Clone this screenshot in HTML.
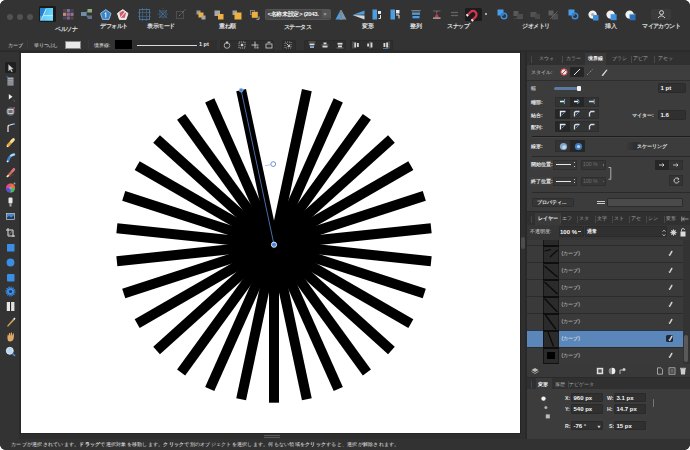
<!DOCTYPE html>
<html><head><meta charset="utf-8"><style>
*{box-sizing:border-box;margin:0;padding:0}
html,body{width:690px;height:450px;overflow:hidden;background:#fff}
body{font-family:"Liberation Sans",sans-serif;color:#ddd;position:relative}
#win{position:absolute;left:0;top:0;width:690px;height:450px;border-radius:6px;overflow:hidden;background:#2c2c2c}
.a{position:absolute}
.t{position:absolute;line-height:1;white-space:nowrap}
.c{position:absolute;line-height:1;white-space:nowrap;transform:translateX(-50%)}
svg{position:absolute;overflow:visible}
</style></head><body><div id="win">
<div class="a" style="left:0px;top:0px;width:690px;height:50px;background:#333333;"></div>
<div class="a" style="left:0px;top:50.5px;width:690px;height:2.5px;background:#2a2a2a;"></div>
<div class="a" style="left:0px;top:52px;width:19px;height:387px;background:#333333;"></div>
<div class="a" style="left:19px;top:52px;width:2px;height:381px;background:#2a2a2a;"></div>
<div class="a" style="left:21px;top:53px;width:499px;height:380px;background:#ffffff;"></div>
<div class="a" style="left:520px;top:52px;width:7px;height:387px;background:#2f2f2f;"></div>
<div class="a" style="left:520px;top:52px;width:1px;height:382px;background:#252525;"></div>
<div class="a" style="left:524.5px;top:52px;width:2.5px;height:387px;background:#292929;"></div>
<div class="a" style="left:521.3px;top:236.5px;width:3.6px;height:12.5px;background:#4c4c4c;border-radius:2px"></div>
<div class="a" style="left:527px;top:52px;width:163px;height:387px;background:#3c3c3c;"></div>
<div class="a" style="left:19px;top:433px;width:501px;height:1px;background:#262626;"></div>
<div class="a" style="left:19px;top:434px;width:501px;height:5px;background:#2e2e2e;"></div>
<div class="a" style="left:264px;top:435px;width:16px;height:0.8px;background:#5a5a5a;"></div>
<div class="a" style="left:264px;top:437px;width:16px;height:0.8px;background:#5a5a5a;"></div>
<div class="a" style="left:0px;top:439px;width:690px;height:11px;background:#323232;"></div>
<div class="a" style="left:7px;top:14.2px;width:6px;height:6px;background:#525252;border-radius:50%"></div>
<div class="a" style="left:17px;top:14.2px;width:6px;height:6px;background:#525252;border-radius:50%"></div>
<div class="a" style="left:27px;top:14.2px;width:6px;height:6px;background:#525252;border-radius:50%"></div>
<div class="a" style="left:38.7px;top:6px;width:17px;height:16px;background:#1a1a1a;border-radius:1.5px"></div>
<svg style="left:40.3px;top:7.7px" width="13.3" height="12.6" viewBox="0 0 13.3 12.6"><defs><linearGradient id="lg" x1="0" y1="0" x2="1" y2="0.3"><stop offset="0" stop-color="#3aa8e8"/><stop offset="1" stop-color="#6ad8fc"/></linearGradient></defs><rect width="13" height="12.7" fill="url(#lg)"/><path d="M0 0 H6 L1 11.5 L0 11.5Z" fill="#1f6fc0" opacity="0.75"/><path d="M1.5 11.5 L6.2 0.8 M3.6 7.7 H13" stroke="#d8f4ff" stroke-width="0.9" fill="none"/><rect y="8" width="13" height="4.7" fill="#8ee4ff" opacity="0.35"/></svg>
<svg style="left:62.5px;top:8.5px" width="11" height="11" viewBox="0 0 11 11"><rect x="3.7" y="0" width="3.2" height="3.2" fill="#7d6f9a" opacity="1"/><rect x="0" y="3.7" width="3.2" height="3.2" fill="#c08a7a" opacity="1"/><rect x="3.7" y="3.7" width="3.2" height="3.2" fill="#8a6a90" opacity="1"/><rect x="7.4" y="3.7" width="3.2" height="3.2" fill="#9a7090" opacity="1"/><rect x="3.7" y="7.4" width="3.2" height="3.2" fill="#7a6488" opacity="1"/><rect x="0" y="0" width="3.2" height="3.2" fill="#6a5a6a" opacity="0.45"/><rect x="7.4" y="7.4" width="3.2" height="3.2" fill="#7a5a70" opacity="0.45"/><rect x="7.4" y="0" width="3.2" height="3.2" fill="#5a5a70" opacity="0.45"/><rect x="0" y="7.4" width="3.2" height="3.2" fill="#6a5a78" opacity="0.45"/></svg>
<svg style="left:81px;top:9px" width="11" height="10" viewBox="0 0 11 10"><rect x="0" y="3" width="5" height="4" fill="#6f8ca8"/><rect x="6.5" y="0" width="4.5" height="3.5" fill="#8fae78"/><rect x="6.5" y="6.5" width="4.5" height="3.5" fill="#6a82a8" opacity="0.8"/><path d="M5 5 L6.5 2 M5 5 L6.5 8" stroke="#7a9ab0" stroke-width="0.8"/></svg>
<svg style="left:99.5px;top:9px" width="11.5" height="11" viewBox="0 0 11.5 11"><path d="M5.75 0.6 L11 4.4 L9 10.4 L2.5 10.4 L0.5 4.4 Z" fill="#3a84c8" stroke="#9cc8ec" stroke-width="0.9" stroke-linejoin="round"/><path d="M5.3 3.5 H6.3 V8.5 H5.3Z M4.3 4.5 L5.3 3.5 V4.7Z" fill="#f0f0f0"/></svg>
<svg style="left:117px;top:9px" width="11.5" height="11" viewBox="0 0 11.5 11"><path d="M5.75 0.6 L11 4.4 L9 10.4 L2.5 10.4 L0.5 4.4 Z" fill="#e8e8e8" stroke="#f4f4f4" stroke-width="0.9" stroke-linejoin="round"/><path d="M2.5 4 L5.75 1.8 L9 4 L7.8 8.8 L3.5 8.8Z" fill="#d8586a"/><path d="M3.5 8.5 L8.2 3" stroke="#f4f4f4" stroke-width="1"/></svg>
<svg style="left:138px;top:8px" width="12.5" height="12" viewBox="0 0 12.5 12"><g opacity="0.75"><rect x="1.5" y="1.5" width="10" height="10" fill="none" stroke="#4a86bd" stroke-width="1"/><path d="M0 4.5H13M0 8.5H13M4.5 0V13M8.5 0V13" stroke="#4a86bd" stroke-width="0.8" opacity="0.7"/></g></svg>
<svg style="left:157px;top:8px" width="12" height="12" viewBox="0 0 12 12"><g opacity="0.7"><path d="M2 2L10 10M10 2L2 10" stroke="#4a7fae" stroke-width="1"/><rect x="3" y="3" width="6" height="6" fill="none" stroke="#4a7fae" stroke-width="0.8"/><path d="M0 6H12M6 0V12" stroke="#4a7fae" stroke-width="0.6" stroke-dasharray="1 1"/></g></svg>
<svg style="left:175px;top:8px" width="12" height="12" viewBox="0 0 12 12"><g opacity="0.8"><rect x="1.5" y="3.5" width="7" height="7" fill="none" stroke="#8a8a8a" stroke-width="0.8" stroke-dasharray="1 1"/><path d="M4 8 L11 1" stroke="#9a9a9a" stroke-width="0.9" stroke-dasharray="1.2 0.8"/></g></svg>
<svg style="left:195.5px;top:9.5px" width="10" height="10" viewBox="0 0 10 10"><rect x="0.5" y="0.5" width="4" height="4" fill="#9a9a9a"/><rect x="2.5" y="2.5" width="5" height="5" fill="#f0b040"/><rect x="5.5" y="5.5" width="4" height="4" fill="#a8a8a8"/></svg>
<svg style="left:213.5px;top:9.5px" width="10" height="10" viewBox="0 0 10 10"><rect x="0.5" y="0.5" width="5.5" height="5.5" fill="#a8a8a8"/><rect x="4" y="4" width="5.5" height="5.5" fill="#f0b040"/></svg>
<svg style="left:232px;top:9.5px" width="10" height="10" viewBox="0 0 10 10"><rect x="0.5" y="0.5" width="4.5" height="4.5" fill="#a0a0a0"/><rect x="2.5" y="2.5" width="7" height="7" fill="#f0b040"/></svg>
<svg style="left:250px;top:9.5px" width="10" height="10" viewBox="0 0 10 10"><rect x="0.5" y="0.5" width="4" height="4" fill="none" stroke="#999" stroke-width="0.7"/><rect x="1.8" y="1.8" width="6" height="6" fill="#f0b040"/><path d="M9 6.5 V9.3 H6.5" stroke="#bbb" stroke-width="0.9" fill="none"/></svg>
<div class="a" style="left:265px;top:8.5px;width:66px;height:11px;background:#4a4a4a;border:0.6px solid #555;border-radius:1.5px"></div>
<div class="t" style="left:267.5px;top:10.8px;font-size:6px;color:#f4f4f4;font-weight:bold;letter-spacing:-0.35px;width:51.15px;text-align:justify;text-align-last:justify">&lt;名称未設定&gt; (2043.</div>
<div class="a" style="left:321.5px;top:10px;width:8px;height:8px;background:#555;border-radius:1px"></div>
<div class="t" style="left:323.3px;top:11px;font-size:6px;color:#bbb;">×</div>
<svg style="left:335px;top:9.5px" width="12" height="10" viewBox="0 0 12 10"><path d="M5.3 0.5 L5.3 9.5 L0.5 9.5Z" fill="#4c9ee0"/><path d="M6.7 0.5 L6.7 9.5 L11.5 9.5Z" fill="#9cc4e8" opacity="0.7"/><path d="M6 0V10" stroke="#ddd" stroke-width="0.8"/></svg>
<svg style="left:351.5px;top:9.5px" width="13" height="10" viewBox="0 0 13 10"><path d="M0.5 5 L12.5 0.5 L12.5 4.6Z" fill="#4c9ee0"/><path d="M0.5 5 L12.5 9.5 L12.5 5.4Z" fill="#d8d8d8"/></svg>
<svg style="left:371.5px;top:9px" width="10" height="11" viewBox="0 0 10 11"><rect x="0.5" y="0.5" width="4.5" height="10" fill="#4c9ee0"/><rect x="6" y="2" width="3" height="3" fill="#e8e8e8"/><path d="M8.5 6 V9.5 H6.5" stroke="#e8e8e8" stroke-width="1" fill="none"/></svg>
<svg style="left:389.5px;top:9px" width="10" height="11" viewBox="0 0 10 11"><rect x="0.5" y="0.5" width="4.5" height="10" fill="#4c9ee0"/><rect x="6" y="1" width="3.5" height="3.5" fill="#e8e8e8"/><path d="M6 6 H9 V9.5" stroke="#e8e8e8" stroke-width="1" fill="none"/></svg>
<svg style="left:410.5px;top:9.5px" width="10" height="9" viewBox="0 0 10 9"><path d="M0.5 0.8H9.5" stroke="#bbb" stroke-width="0.8"/><rect x="1" y="2.5" width="8" height="2.3" fill="#4c9ee0"/><rect x="1.5" y="6" width="7" height="2.3" fill="#4c9ee0"/></svg>
<svg style="left:432px;top:9.5px" width="9.5" height="9.5" viewBox="0 0 9.5 9.5"><path d="M1 1 H8.5 M1 8.5 H8.5" stroke="#8a8a8a" stroke-width="0.6"/><path d="M2.5 7.5 L4.75 3 L7 7.5Z" fill="#c83a4a"/><path d="M1 8 H8.5" stroke="#e0e0e0" stroke-width="0.8"/><path d="M4.75 1V3" stroke="#999" stroke-width="0.6"/></svg>
<svg style="left:449.5px;top:10px" width="9" height="8" viewBox="0 0 9 8"><path d="M1 2.5H8M1 5.5H8" stroke="#6e6e6e" stroke-width="0.9"/><path d="M3 1V7M6 1V7" stroke="#555" stroke-width="0.6"/></svg>
<div class="a" style="left:464.5px;top:7.5px;width:17px;height:13px;background:#1c1c1c;border-radius:1.5px"></div>
<svg style="left:467px;top:8.5px" width="12" height="11" viewBox="0 0 12 11"><g transform="rotate(-135 6 5.5)"><path d="M2.5 1 V5.5 A3.5 3.5 0 0 0 9.5 5.5 V1" stroke="#d8344a" stroke-width="2.3" fill="none"/><path d="M2.5 0 V1.8 M9.5 0 V1.8" stroke="#f0f0f0" stroke-width="2.3"/></g></svg>
<div class="a" style="left:485px;top:13px;width:2px;height:2px;background:#cfcfcf;border-radius:50%"></div>
<svg style="left:496.5px;top:9px" width="11" height="11" viewBox="0 0 11 11"><rect x="0.5" y="0.5" width="6" height="6" fill="#4a9ee8"/><circle cx="7" cy="7" r="2.8" fill="none" stroke="#3a8ee0" stroke-width="1.4"/><path d="M4 4 H6.5 V6.5 H4Z" fill="#2f7fcf"/></svg>
<svg style="left:513px;top:9.5px" width="11" height="10" viewBox="0 0 11 10"><rect x="0.5" y="1" width="5" height="5" fill="#595959"/><rect x="4" y="4" width="6" height="5" fill="#4d4d4d"/><path d="M1 8.5 H9" stroke="#555" stroke-width="0.6"/></svg>
<svg style="left:530px;top:9.5px" width="11" height="10" viewBox="0 0 11 10"><rect x="0.5" y="2" width="6" height="5" fill="#525252"/><rect x="5" y="4" width="5" height="5" fill="#484848"/></svg>
<svg style="left:548px;top:9.5px" width="11" height="10" viewBox="0 0 11 10"><rect x="0.5" y="0.5" width="5" height="5" fill="#5e5e5e"/><rect x="4" y="4" width="6" height="5.5" fill="#4e4e4e"/><path d="M2 9 L9.5 1.5" stroke="#6a6a6a" stroke-width="0.8"/></svg>
<svg style="left:568px;top:9px" width="11" height="11" viewBox="0 0 11 11"><rect x="0.5" y="0.5" width="6" height="6" fill="#4a9ee8"/><circle cx="7" cy="7" r="2.8" fill="none" stroke="#3a8ee0" stroke-width="1.4"/><path d="M4 4 H6.5 V6.5 H4Z" fill="#2f7fcf"/></svg>
<svg style="left:587.5px;top:9.5px" width="11" height="10.5" viewBox="0 0 11 10.5"><circle cx="4.6" cy="4.6" r="4.2" fill="#f0f0f0"/><rect x="5" y="5" width="5.5" height="5.5" fill="#3a8fdf"/><circle cx="4.6" cy="4.6" r="1.5" fill="#aaa"/></svg>
<svg style="left:606px;top:9.5px" width="11" height="10.5" viewBox="0 0 11 10.5"><circle cx="4.6" cy="4.6" r="4.2" fill="#f0f0f0"/><rect x="4.6" y="4.2" width="6" height="6" fill="#3a93e3"/></svg>
<svg style="left:625px;top:9.5px" width="11" height="10.5" viewBox="0 0 11 10.5"><circle cx="4.6" cy="4.6" r="4.2" fill="#f0f0f0"/><path d="M4.6 4.2 H10.6 V10.2 H4.6Z" fill="#2a6fb8"/><path d="M4.6 4.2 L10.6 4.2" stroke="#9cc" stroke-width="0.5"/></svg>
<div class="a" style="left:651px;top:8.5px;width:20px;height:11.5px;background:#3b3b3b;border-radius:2px"></div>
<svg style="left:656.5px;top:10px" width="9" height="8.5" viewBox="0 0 9 8.5"><circle cx="4.5" cy="2.6" r="2" stroke="#e4e4e4" stroke-width="0.9" fill="none"/><path d="M1 8 Q4.5 3.6 8 8" stroke="#e4e4e4" stroke-width="0.9" fill="none"/></svg>
<div class="c" style="left:66px;top:26.3px;font-size:6px;color:#e0e0e0;font-weight:bold;letter-spacing:-0.7px;width:21.90px;text-align:justify;text-align-last:justify">ペルソナ</div>
<div class="c" style="left:114px;top:23.3px;font-size:6px;color:#e0e0e0;font-weight:bold;letter-spacing:-0.7px;width:27.22px;text-align:justify;text-align-last:justify">デフォルト</div>
<div class="c" style="left:161px;top:23.3px;font-size:6px;color:#e0e0e0;font-weight:bold;letter-spacing:-0.7px;width:27.22px;text-align:justify;text-align-last:justify">表示モード</div>
<div class="c" style="left:227.5px;top:23.3px;font-size:6px;color:#e0e0e0;font-weight:bold;letter-spacing:-0.7px;width:16.61px;text-align:justify;text-align-last:justify">重ね順</div>
<div class="c" style="left:297.5px;top:23.8px;font-size:6px;color:#e0e0e0;font-weight:bold;letter-spacing:-0.7px;width:27.22px;text-align:justify;text-align-last:justify">ステータス</div>
<div class="c" style="left:368px;top:23.3px;font-size:6px;color:#e0e0e0;font-weight:bold;letter-spacing:-0.7px;width:11.31px;text-align:justify;text-align-last:justify">変形</div>
<div class="c" style="left:416px;top:23.3px;font-size:6px;color:#e0e0e0;font-weight:bold;letter-spacing:-0.7px;width:11.31px;text-align:justify;text-align-last:justify">整列</div>
<div class="c" style="left:458px;top:23.3px;font-size:6px;color:#e0e0e0;font-weight:bold;letter-spacing:-0.7px;width:21.90px;text-align:justify;text-align-last:justify">スナップ</div>
<div class="c" style="left:536px;top:23.3px;font-size:6px;color:#e0e0e0;font-weight:bold;letter-spacing:-0.7px;width:27.22px;text-align:justify;text-align-last:justify">ジオメトリ</div>
<div class="c" style="left:611px;top:23.3px;font-size:6px;color:#e0e0e0;font-weight:bold;letter-spacing:-0.7px;width:11.31px;text-align:justify;text-align-last:justify">挿入</div>
<div class="c" style="left:661px;top:23.3px;font-size:6px;color:#e0e0e0;font-weight:bold;letter-spacing:-0.7px;width:37.81px;text-align:justify;text-align-last:justify">マイアカウント</div>
<div class="t" style="left:8px;top:42.5px;font-size:5px;color:#e4e4e4;letter-spacing:0.2px;width:15.41px;text-align:justify;text-align-last:justify">カーブ</div>
<div class="a" style="left:26.5px;top:40px;width:0.8px;height:9px;background:#3a3a3a;"></div>
<div class="t" style="left:34px;top:42.5px;font-size:5px;color:#e4e4e4;letter-spacing:-0.2px;width:24.22px;text-align:justify;text-align-last:justify">塗りつぶし</div>
<div class="a" style="left:65px;top:41px;width:16px;height:8px;background:#e9e9e9;border:0.5px solid #888"></div>
<div class="a" style="left:87.5px;top:40px;width:0.8px;height:9px;background:#3a3a3a;"></div>
<div class="t" style="left:94px;top:42.5px;font-size:5px;color:#e4e4e4;letter-spacing:0px;width:16.39px;text-align:justify;text-align-last:justify">境界線:</div>
<div class="a" style="left:115px;top:40px;width:17px;height:9px;background:#000;"></div>
<div class="a" style="left:133px;top:40px;width:84px;height:10px;background:#2f2f2f;border-radius:2px"></div>
<div class="a" style="left:137px;top:44.8px;width:60px;height:1px;background:#d8d8d8;"></div>
<div class="t" style="left:199px;top:42px;font-size:5.5px;color:#e8e8e8;font-weight:bold">1 pt</div>
<div class="a" style="left:220px;top:40px;width:54px;height:10.5px;background:#2e2e2e;border:0.6px solid #2a2a2a;border-radius:1.5px"></div>
<div class="a" style="left:281.5px;top:40px;width:14px;height:10.5px;background:#2e2e2e;border:0.6px solid #2a2a2a;border-radius:1.5px"></div>
<div class="a" style="left:304px;top:40px;width:41.5px;height:10px;background:#2e2e2e;border:0.6px solid #2a2a2a;border-radius:1.5px"></div>
<div class="a" style="left:350px;top:40px;width:42.5px;height:10px;background:#2e2e2e;border:0.6px solid #2a2a2a;border-radius:1.5px"></div>
<svg style="left:223.3px;top:41px" width="8" height="8" viewBox="0 0 8 8"><circle cx="4" cy="4.5" r="2.8" stroke="#c8c8c8" stroke-width="0.8" fill="none"/><rect x="3" y="0.5" width="2" height="2" fill="#c8c8c8"/></svg>
<svg style="left:237.5px;top:41px" width="8" height="8" viewBox="0 0 8 8"><rect x="1" y="1" width="6" height="6" stroke="#c0c0c0" stroke-width="0.8" fill="none" stroke-dasharray="1.2 0.8"/><rect x="2.8" y="2.8" width="2.4" height="2.4" fill="#d0d0d0"/></svg>
<svg style="left:251.1px;top:41px" width="8" height="8" viewBox="0 0 8 8"><path d="M4 0.5V7.5M0.5 4H7.5" stroke="#d0d0d0" stroke-width="0.9"/><rect x="5.5" y="5.5" width="2" height="2" fill="#999"/></svg>
<svg style="left:264.7px;top:41px" width="8" height="8" viewBox="0 0 8 8"><rect x="1" y="3" width="6" height="4" stroke="#d0d0d0" stroke-width="0.8" fill="none"/><path d="M2.5 1.2H5.5" stroke="#d0d0d0" stroke-width="1"/></svg>
<svg style="left:283.8px;top:41px" width="8" height="8" viewBox="0 0 8 8"><rect x="1" y="1" width="6" height="6" stroke="#bdbdbd" stroke-width="0.7" fill="none" stroke-dasharray="1 1"/><path d="M2.5 2.5 L5.5 5.5 M5.5 3.5 V5.5 H3.5" stroke="#e0e0e0" stroke-width="0.8" fill="none"/></svg>
<svg style="left:307.7px;top:41px" width="8" height="8" viewBox="0 0 8 8"><path d="M0.5 1H7.5" stroke="#999" stroke-width="0.6"/><rect x="1.5" y="2.5" width="5" height="1.8" fill="#d8d8d8"/><rect x="2" y="5.2" width="4" height="1.8" fill="#8ab0d8"/></svg>
<svg style="left:320.7px;top:41px" width="8" height="8" viewBox="0 0 8 8"><path d="M0.5 4H7.5" stroke="#999" stroke-width="0.6"/><rect x="2.5" y="1.5" width="3" height="1.8" fill="#d8d8d8"/><rect x="1.5" y="4.7" width="5" height="1.8" fill="#d8d8d8"/></svg>
<svg style="left:335.9px;top:41px" width="8" height="8" viewBox="0 0 8 8"><path d="M0.5 7H7.5" stroke="#999" stroke-width="0.6"/><rect x="1.5" y="1.8" width="5" height="1.8" fill="#d8d8d8"/><rect x="2" y="4.5" width="4" height="1.8" fill="#d8d8d8"/></svg>
<svg style="left:351.9px;top:41px" width="8" height="8" viewBox="0 0 8 8"><path d="M1 0.5V7.5" stroke="#999" stroke-width="0.6"/><rect x="2.3" y="1.5" width="1.8" height="5" fill="#d8d8d8"/><rect x="5" y="2" width="1.8" height="4" fill="#d8d8d8"/></svg>
<svg style="left:366.3px;top:41px" width="8" height="8" viewBox="0 0 8 8"><path d="M4 0.5V7.5" stroke="#999" stroke-width="0.6"/><rect x="1.2" y="2.5" width="1.8" height="3" fill="#d8d8d8"/><rect x="4.6" y="1.5" width="1.8" height="5" fill="#d8d8d8"/></svg>
<svg style="left:382.3px;top:41px" width="8" height="8" viewBox="0 0 8 8"><path d="M7 0.5V7.5" stroke="#999" stroke-width="0.6"/><rect x="1.5" y="2" width="1.8" height="4" fill="#d8d8d8"/><rect x="4.2" y="1.5" width="1.8" height="5" fill="#d8d8d8"/><path d="M1 7.5H6" stroke="#4a88c8" stroke-width="0.8"/></svg>
<div class="a" style="left:5px;top:61.5px;width:11px;height:11px;background:#1f1f1f;border-radius:1.5px"></div>
<svg style="left:5px;top:61.5px" width="11" height="11" viewBox="0 0 11 11"><path d="M3.5 2.5 L3.5 9 L5.1 7.4 L6.6 10 L7.6 9.4 L6.1 6.9 L8.4 6.9 Z" fill="#d8d8d8" stroke="#999" stroke-width="0.3"/></svg>
<svg style="left:5px;top:75.5px" width="11" height="11" viewBox="0 0 11 11"><rect x="2.5" y="1.5" width="6" height="8" fill="#a8b0b8"/><path d="M2.5 3.8H8.5M2.5 6H8.5M2.5 8H8.5" stroke="#555" stroke-width="0.7"/><path d="M1.5 0.5 L3.5 1.5" stroke="#4a8fd0" stroke-width="0.8"/></svg>
<svg style="left:5px;top:91px" width="11" height="11" viewBox="0 0 11 11"><path d="M3.5 2.5 L3.5 9 L8 5.8 Z" fill="#f4f4f4" stroke="#111" stroke-width="0.5"/><path d="M8.5 9 L9.8 10.2" stroke="#8a8a8a" stroke-width="0.8"/></svg>
<svg style="left:5px;top:106px" width="11" height="11" viewBox="0 0 11 11"><circle cx="5.5" cy="5.5" r="4.2" fill="#6a6f78"/><rect x="3" y="3.5" width="5" height="4" fill="none" stroke="#ddd" stroke-width="0.8"/><circle cx="9" cy="2" r="1" fill="#d04a6a"/></svg>
<svg style="left:5px;top:121.5px" width="11" height="11" viewBox="0 0 11 11"><path d="M3 10 L3 5 Q3 3 5 3 L8.5 2" stroke="#e8e8e8" stroke-width="1.2" fill="none"/><circle cx="9" cy="2" r="1" fill="#4a9ae0"/></svg>
<svg style="left:5px;top:136.5px" width="11" height="11" viewBox="0 0 11 11"><path d="M3 8.5 L8 3" stroke="#e0a840" stroke-width="3" stroke-linecap="round"/><path d="M6.5 4.5 L8.5 2.5" stroke="#f4e0a0" stroke-width="2.6" stroke-linecap="round"/><path d="M2 9.8 L3 8.8" stroke="#fff" stroke-width="1.2"/></svg>
<svg style="left:5px;top:151.5px" width="11" height="11" viewBox="0 0 11 11"><path d="M3 9 Q4 4 9 2.5" stroke="#3f86c8" stroke-width="2.6" stroke-linecap="round" fill="none"/><path d="M6 3.6 Q8 2.6 9 2.5" stroke="#b8d8f0" stroke-width="2" fill="none" stroke-linecap="round"/><path d="M2 10 L3.2 8.8" stroke="#f0f0f0" stroke-width="1.4"/></svg>
<svg style="left:5px;top:166.5px" width="11" height="11" viewBox="0 0 11 11"><path d="M3.5 8.5 L8.8 2.5" stroke="#c87050" stroke-width="2.6" stroke-linecap="round"/><path d="M7.5 4 L9 2.3" stroke="#e86a8a" stroke-width="2.4" stroke-linecap="round"/><path d="M1.8 10 L3.6 8.2" stroke="#f4e8c8" stroke-width="1.6"/><path d="M5 9.5 L9 7" stroke="#556" stroke-width="0.6"/></svg>
<svg style="left:5px;top:181.5px" width="11" height="11" viewBox="0 0 11 11"><circle cx="5.5" cy="6" r="4.5" fill="#e04a8a"/><path d="M5.5 1.5 A4.5 4.5 0 0 1 10 6 L5.5 6Z" fill="#f07030"/><path d="M10 6 A4.5 4.5 0 0 1 5.5 10.5 L5.5 6Z" fill="#40c060"/><path d="M5.5 10.5 A4.5 4.5 0 0 1 1 6 L5.5 6Z" fill="#5050e0"/><circle cx="5.5" cy="6" r="1.3" fill="#a0a0c0"/><circle cx="9.5" cy="1.5" r="0.9" fill="#aaa"/></svg>
<svg style="left:5px;top:196px" width="11" height="11" viewBox="0 0 11 11"><rect x="3.5" y="1.5" width="4" height="6" fill="#e8e8e8" rx="1"/><rect x="4.5" y="8" width="2" height="2.5" fill="#aaa"/></svg>
<svg style="left:5px;top:211px" width="11" height="11" viewBox="0 0 11 11"><rect x="1.5" y="2.5" width="8" height="6" fill="#4a84c8"/><path d="M1.5 7 L4 5 L6 6.5 L9.5 4 V8.5 H1.5Z" fill="#1f3a60"/><rect x="1.5" y="2.5" width="8" height="6" fill="none" stroke="#ddd" stroke-width="0.6"/></svg>
<svg style="left:5px;top:226.5px" width="11" height="11" viewBox="0 0 11 11"><path d="M3 1V9H10M1 3H8V10" stroke="#e0e0e0" stroke-width="1" fill="none"/><path d="M3 9L8 3" stroke="#aaa" stroke-width="0.6"/></svg>
<svg style="left:5px;top:241.5px" width="11" height="11" viewBox="0 0 11 11"><rect x="2" y="2" width="7.5" height="7.5" fill="#3a8ee6" rx="0.5"/></svg>
<svg style="left:5px;top:256.5px" width="11" height="11" viewBox="0 0 11 11"><circle cx="5.5" cy="5.5" r="3.9" fill="#3a8ee6"/></svg>
<svg style="left:5px;top:271.5px" width="11" height="11" viewBox="0 0 11 11"><rect x="2" y="2" width="7.5" height="7.5" fill="#3a8ee6" rx="1"/></svg>
<svg style="left:5px;top:286px" width="11" height="11" viewBox="0 0 11 11"><circle cx="5.5" cy="5.5" r="3.6" fill="#3a8ee6"/><circle cx="5.5" cy="5.5" r="4.3" fill="none" stroke="#3a8ee6" stroke-width="1.4" stroke-dasharray="1.2 1"/><circle cx="5.5" cy="5.5" r="1.5" fill="#173a68"/></svg>
<svg style="left:5px;top:301px" width="11" height="11" viewBox="0 0 11 11"><rect x="1.8" y="1" width="3.4" height="9" fill="#e8e8e8"/><rect x="6" y="1" width="3.4" height="9" fill="#e0e0e0"/><path d="M5.6 1V10" stroke="#111" stroke-width="0.8"/></svg>
<svg style="left:5px;top:315.5px" width="11" height="11" viewBox="0 0 11 11"><path d="M2 10 L8 3 L9.3 4.2 L3 10.8Z" fill="#d0a060"/><path d="M8 3 L9.5 1.5 L10.5 2.5 L9.3 4.2" fill="#eee"/></svg>
<svg style="left:5px;top:330.5px" width="11" height="11" viewBox="0 0 11 11"><path d="M3 10 Q2 7 2.5 5 L3 3 L4 5 L4 2 L5 2 L5.5 5 L6 1.5 L7 1.5 L7 5 L8 2.5 L9 2.5 L8.8 7 Q8 10.5 5 10.5Z" fill="#e0a868"/></svg>
<svg style="left:5px;top:345.5px" width="11" height="11" viewBox="0 0 11 11"><circle cx="4.8" cy="4.8" r="3.5" fill="#b8d8f0" stroke="#e8f4ff" stroke-width="0.8"/><path d="M7.3 7.3 L10 10" stroke="#4a8ed0" stroke-width="1.6"/></svg>
<div class="a" style="left:527px;top:52px;width:163px;height:12.5px;background:#303030;"></div>
<div class="a" style="left:530.5px;top:56px;width:1.5px;height:7px;background:#474747;border-radius:1px"></div>
<div class="t" style="left:539px;top:56px;font-size:5.2px;color:#a8a8a8;;width:15.00px;text-align:justify;text-align-last:justify">スウォ</div>
<div class="t" style="left:566px;top:56px;font-size:5.2px;color:#a8a8a8;;width:15.00px;text-align:justify;text-align-last:justify">カラー</div>
<div class="a" style="left:585px;top:53px;width:21px;height:11.5px;background:#3a3a3a;"></div>
<div class="t" style="left:587.5px;top:56px;font-size:5.2px;color:#f4f4f4;font-weight:bold;width:15.00px;text-align:justify;text-align-last:justify">境界線</div>
<div class="t" style="left:612px;top:56px;font-size:5.2px;color:#a8a8a8;;width:15.00px;text-align:justify;text-align-last:justify">ブラシ</div>
<div class="t" style="left:632.5px;top:56px;font-size:5.2px;color:#a8a8a8;;width:15.00px;text-align:justify;text-align-last:justify">アピア</div>
<div class="t" style="left:657.5px;top:56px;font-size:5.2px;color:#a8a8a8;;width:15.00px;text-align:justify;text-align-last:justify">アセッ</div>
<div class="a" style="left:561.5px;top:55.5px;width:0.6px;height:7px;background:#4a4a4a;"></div>
<div class="a" style="left:630.5px;top:55.5px;width:0.6px;height:7px;background:#4a4a4a;"></div>
<div class="a" style="left:654px;top:55.5px;width:0.6px;height:7px;background:#4a4a4a;"></div>
<div class="a" style="left:527px;top:64.5px;width:163px;height:15px;background:#3e3e3e;"></div>
<div class="a" style="left:527px;top:79.5px;width:163px;height:0.8px;background:#2e2e2e;"></div>
<div class="t" style="left:531px;top:69.5px;font-size:5.2px;color:#d0d0d0;;width:21.45px;text-align:justify;text-align-last:justify">スタイル:</div>
<svg style="left:559.5px;top:68px" width="8" height="8" viewBox="0 0 8 8"><circle cx="4" cy="4" r="3.2" stroke="#c84040" stroke-width="1" fill="#e8e8e8"/><path d="M1.8 6.2 L6.2 1.8" stroke="#c84040" stroke-width="1"/></svg>
<div class="a" style="left:570px;top:67px;width:13.7px;height:10px;background:#262626;border-radius:1px"></div>
<svg style="left:573px;top:68px" width="8" height="8" viewBox="0 0 8 8"><path d="M1 7 L7 1" stroke="#e8e8e8" stroke-width="1"/></svg>
<svg style="left:586px;top:68px" width="8" height="8" viewBox="0 0 8 8"><path d="M1 7 L7 1" stroke="#aaa" stroke-width="0.8" stroke-dasharray="1.2 1"/></svg>
<svg style="left:600px;top:67.5px" width="8" height="9" viewBox="0 0 8 9"><path d="M1.5 7.5 L6 2 Q7 1 7.5 2 L3 8 Z" fill="#ddd"/></svg>
<div class="t" style="left:531px;top:85.5px;font-size:5.2px;color:#e4e4e4;;width:5.00px;text-align:justify;text-align-last:justify">幅</div>
<div class="a" style="left:553.5px;top:86.8px;width:25px;height:3px;background:#5a7aa0;border-radius:1.5px"></div>
<div class="a" style="left:577px;top:85.5px;width:4.2px;height:5.3px;background:#f4f4f4;border-radius:1px"></div>
<div class="a" style="left:658px;top:83px;width:28px;height:10px;background:#303030;border:0.6px solid #2a2a2a;border-radius:1.5px"></div>
<div class="t" style="left:660.5px;top:85px;font-size:6px;color:#f4f4f4;font-weight:bold">1 pt</div>
<div class="a" style="left:555px;top:96.5px;width:43.5px;height:10.5px;background:#343434;border:0.6px solid #2e2e2e"></div>
<svg style="left:558.75px;top:98.25px" width="7" height="7" viewBox="0 0 7 7"><path d="M1 3.5H6" stroke="#cfe" stroke-width="1.5"/><path d="M5.5 1V6" stroke="#6a9ad0" stroke-width="1"/></svg>
<div class="a" style="left:569.5px;top:96.5px;width:14.5px;height:10.5px;background:#262626;"></div>
<svg style="left:573.25px;top:98.25px" width="7" height="7" viewBox="0 0 7 7"><path d="M1 3.5H5" stroke="#dff" stroke-width="1.5"/><path d="M4 1.5 A2 2 0 0 1 4 5.5" stroke="#6a9ad0" fill="none"/></svg>
<svg style="left:587.75px;top:98.25px" width="7" height="7" viewBox="0 0 7 7"><path d="M1 3.5H6" stroke="#bde" stroke-width="1.5"/><path d="M6.2 1V6" stroke="#ccc" stroke-width="0.6"/></svg>
<div class="a" style="left:555px;top:108.7px;width:43.5px;height:10.5px;background:#343434;border:0.6px solid #2e2e2e"></div>
<div class="a" style="left:555px;top:108.7px;width:14.5px;height:10.5px;background:#262626;"></div>
<svg style="left:558.75px;top:110.45px" width="7" height="7" viewBox="0 0 7 7"><path d="M1.5 6.5 V1.5 H6.5" stroke="#e0e8f0" stroke-width="1.3" fill="none"/><path d="M3 5 L5.5 2.5" stroke="#6a9ad0" stroke-width="0.8"/></svg>
<svg style="left:573.25px;top:110.45px" width="7" height="7" viewBox="0 0 7 7"><path d="M1.5 6.5 V3 Q1.5 1.5 3 1.5 H6.5" stroke="#d0dce8" stroke-width="1.3" fill="none"/><path d="M3 5 L5.5 2.5" stroke="#6a9ad0" stroke-width="0.8"/></svg>
<svg style="left:587.75px;top:110.45px" width="7" height="7" viewBox="0 0 7 7"><path d="M1.5 6.5 V3 L3 1.5 H6.5" stroke="#d0dce8" stroke-width="1.3" fill="none"/></svg>
<div class="a" style="left:555px;top:121px;width:43.5px;height:11px;background:#343434;border:0.6px solid #2e2e2e"></div>
<div class="a" style="left:555px;top:121px;width:14.5px;height:11px;background:#262626;"></div>
<svg style="left:558.75px;top:123px" width="7" height="7" viewBox="0 0 7 7"><path d="M1.5 6.5 V1.5 H6.5" stroke="#e0e8f0" stroke-width="1.3" fill="none"/><path d="M3 5 L5.5 2.5" stroke="#6a9ad0" stroke-width="0.8"/></svg>
<svg style="left:573.25px;top:123px" width="7" height="7" viewBox="0 0 7 7"><path d="M1.5 6.5 V3 Q1.5 1.5 3 1.5 H6.5" stroke="#d0dce8" stroke-width="1.3" fill="none"/><path d="M3 5 L5.5 2.5" stroke="#6a9ad0" stroke-width="0.8"/></svg>
<svg style="left:587.75px;top:123px" width="7" height="7" viewBox="0 0 7 7"><path d="M1.5 6.5 V3 L3 1.5 H6.5" stroke="#d0dce8" stroke-width="1.3" fill="none"/></svg>
<div class="t" style="left:531px;top:99.5px;font-size:5.2px;color:#e6e6e6;font-weight:bold;width:11.73px;text-align:justify;text-align-last:justify">端部:</div>
<div class="t" style="left:531px;top:112.5px;font-size:5.2px;color:#e6e6e6;font-weight:bold;width:11.73px;text-align:justify;text-align-last:justify">結合:</div>
<div class="t" style="left:531px;top:125px;font-size:5.2px;color:#e6e6e6;font-weight:bold;width:11.73px;text-align:justify;text-align-last:justify">配列:</div>
<div class="t" style="left:632px;top:112.5px;font-size:5.2px;color:#e6e6e6;font-weight:bold;width:21.73px;text-align:justify;text-align-last:justify">マイター:</div>
<div class="a" style="left:658px;top:110px;width:28px;height:10px;background:#303030;border:0.6px solid #2a2a2a;border-radius:1.5px"></div>
<div class="t" style="left:660.5px;top:112px;font-size:6px;color:#f4f4f4;font-weight:bold">1.6</div>
<div class="a" style="left:532px;top:136px;width:158px;height:1px;background:#1e1e1e;"></div>
<div class="a" style="left:532px;top:137px;width:158px;height:1px;background:#444;"></div>
<div class="t" style="left:531px;top:143.5px;font-size:5.2px;color:#e6e6e6;font-weight:bold;width:11.73px;text-align:justify;text-align-last:justify">線形:</div>
<div class="a" style="left:554.5px;top:139.5px;width:30px;height:12.5px;background:#343434;border:0.6px solid #2e2e2e"></div>
<svg style="left:558.5px;top:142.25px" width="7" height="7" viewBox="0 0 7 7"><circle cx="4.5" cy="4.5" r="3.6" fill="#7fa6cc"/><circle cx="5.2" cy="5.2" r="2" fill="#c8d4e0"/></svg>
<div class="a" style="left:569.5px;top:139.5px;width:15px;height:12.5px;background:#262626;"></div>
<svg style="left:573.5px;top:142.25px" width="7" height="7" viewBox="0 0 7 7"><circle cx="4.5" cy="4.5" r="3.6" fill="#3c7cc0"/><circle cx="4.5" cy="4.5" r="1.6" fill="#b8d0ea"/></svg>
<div class="a" style="left:627px;top:142px;width:15px;height:8px;background:linear-gradient(90deg,#393939,#2e2e2e 60%,#393939);border-radius:2px;filter:blur(0.6px)"></div>
<div class="t" style="left:637px;top:143.5px;font-size:5.2px;color:#e8e8e8;font-weight:bold;width:30.00px;text-align:justify;text-align-last:justify">スケーリング</div>
<div class="a" style="left:532px;top:155.5px;width:158px;height:1px;background:#2a2a2a;"></div>
<div class="a" style="left:530px;top:160px;width:22.5px;height:9.5px;background:#3f3f3f;border-radius:1px"></div>
<div class="a" style="left:552.5px;top:160px;width:24px;height:9.5px;background:#383838;border:0.6px solid #303030"></div>
<div class="a" style="left:555.5px;top:164.3px;width:15px;height:0.9px;background:#e8e8e8;"></div>
<div class="a" style="left:573.5px;top:162px;width:1px;height:1.2px;background:#bbb;"></div>
<div class="a" style="left:573.5px;top:165.5px;width:1px;height:1.2px;background:#bbb;"></div>
<div class="a" style="left:581px;top:160px;width:25px;height:9.5px;background:#363636;border:0.6px solid #2e2e2e;border-radius:1px"></div>
<div class="t" style="left:583px;top:162.3px;font-size:5.2px;color:#707070;">100 %</div>
<div class="a" style="left:602.5px;top:164px;width:1.5px;height:1.5px;background:#777;border-radius:50%"></div>
<div class="a" style="left:530px;top:176.5px;width:22.5px;height:9.5px;background:#3f3f3f;border-radius:1px"></div>
<div class="a" style="left:552.5px;top:176.5px;width:24px;height:9.5px;background:#383838;border:0.6px solid #303030"></div>
<div class="a" style="left:555.5px;top:180.8px;width:15px;height:0.9px;background:#e8e8e8;"></div>
<div class="a" style="left:573.5px;top:178.5px;width:1px;height:1.2px;background:#bbb;"></div>
<div class="a" style="left:573.5px;top:182px;width:1px;height:1.2px;background:#bbb;"></div>
<div class="a" style="left:581px;top:176.5px;width:25px;height:9.5px;background:#363636;border:0.6px solid #2e2e2e;border-radius:1px"></div>
<div class="t" style="left:583px;top:178.8px;font-size:5.2px;color:#707070;">100 %</div>
<div class="a" style="left:602.5px;top:180.5px;width:1.5px;height:1.5px;background:#777;border-radius:50%"></div>
<div class="t" style="left:531px;top:162.3px;font-size:5.2px;color:#e6e6e6;font-weight:bold;width:21.73px;text-align:justify;text-align-last:justify">開始位置:</div>
<div class="t" style="left:531px;top:178.8px;font-size:5.2px;color:#e6e6e6;font-weight:bold;width:21.73px;text-align:justify;text-align-last:justify">終了位置:</div>
<svg style="left:608.3px;top:166.5px" width="4" height="13" viewBox="0 0 4 13"><path d="M0.5 0.5 H2.8 V12.3 H0.5" stroke="#bbb" stroke-width="0.9" fill="none"/></svg>
<div class="a" style="left:655px;top:160px;width:28px;height:10px;background:#343434;border:0.6px solid #2e2e2e"></div>
<div class="a" style="left:655px;top:160px;width:14px;height:10px;background:#262626;"></div>
<svg style="left:658px;top:162px" width="8" height="6" viewBox="0 0 8 6"><path d="M1 3H6M4.5 1.5 L6 3 L4.5 4.5" stroke="#ddd" stroke-width="0.9" fill="none"/></svg>
<svg style="left:672px;top:162px" width="8" height="6" viewBox="0 0 8 6"><path d="M1 3H6M4.5 1.5 L6 3 L4.5 4.5" stroke="#ccc" stroke-width="0.9" fill="none"/></svg>
<div class="a" style="left:669px;top:175px;width:14px;height:11px;background:#343434;border:0.6px solid #2e2e2e"></div>
<svg style="left:672.5px;top:177px" width="7" height="7" viewBox="0 0 7 7"><path d="M5.5 2 A2.5 2.5 0 1 0 6 4" stroke="#ddd" stroke-width="0.9" fill="none"/><path d="M4.5 0.8 L6 2 L4.5 3" stroke="#ddd" stroke-width="0.7" fill="none"/></svg>
<div class="a" style="left:532px;top:192.3px;width:158px;height:1px;background:#2a2a2a;"></div>
<div class="a" style="left:531.5px;top:197.5px;width:42px;height:9.5px;background:#363636;border:0.6px solid #2e2e2e;border-radius:1.5px"></div>
<div class="t" style="left:537px;top:199.5px;font-size:5.2px;color:#e6e6e6;font-weight:bold;width:29.33px;text-align:justify;text-align-last:justify">プロパティ...</div>
<div class="a" style="left:597px;top:200.5px;width:8px;height:1px;background:#ccc;"></div>
<div class="a" style="left:597px;top:202.5px;width:8px;height:1px;background:#ccc;"></div>
<div class="a" style="left:607px;top:198px;width:76px;height:8.5px;background:#4a4a4a;border:0.6px solid #2c2c2c;border-radius:1px"></div>
<div class="a" style="left:527px;top:211px;width:163px;height:1.5px;background:#2a2a2a;"></div>
<div class="a" style="left:527px;top:212px;width:163px;height:13px;background:#303030;"></div>
<div class="a" style="left:530.5px;top:215.5px;width:1.5px;height:7px;background:#474747;border-radius:1px"></div>
<div class="a" style="left:535px;top:212.5px;width:26px;height:12.5px;background:#3a3a3a;"></div>
<div class="t" style="left:537.5px;top:216px;font-size:5.2px;color:#f4f4f4;font-weight:bold;width:20.00px;text-align:justify;text-align-last:justify">レイヤー</div>
<div class="t" style="left:562px;top:216px;font-size:5.2px;color:#a8a8a8;;width:10.00px;text-align:justify;text-align-last:justify">エフ</div>
<div class="a" style="left:560px;top:215.5px;width:0.6px;height:7px;background:#474747;"></div>
<div class="t" style="left:579px;top:216px;font-size:5.2px;color:#a8a8a8;;width:10.00px;text-align:justify;text-align-last:justify">スタ</div>
<div class="a" style="left:577px;top:215.5px;width:0.6px;height:7px;background:#474747;"></div>
<div class="t" style="left:596.5px;top:216px;font-size:5.2px;color:#a8a8a8;;width:10.00px;text-align:justify;text-align-last:justify">文字</div>
<div class="a" style="left:594.5px;top:215.5px;width:0.6px;height:7px;background:#474747;"></div>
<div class="t" style="left:613.5px;top:216px;font-size:5.2px;color:#a8a8a8;;width:10.00px;text-align:justify;text-align-last:justify">スト</div>
<div class="a" style="left:611.5px;top:215.5px;width:0.6px;height:7px;background:#474747;"></div>
<div class="t" style="left:631px;top:216px;font-size:5.2px;color:#a8a8a8;;width:10.00px;text-align:justify;text-align-last:justify">アセ</div>
<div class="a" style="left:629px;top:215.5px;width:0.6px;height:7px;background:#474747;"></div>
<div class="t" style="left:648px;top:216px;font-size:5.2px;color:#a8a8a8;;width:10.00px;text-align:justify;text-align-last:justify">シン</div>
<div class="a" style="left:646px;top:215.5px;width:0.6px;height:7px;background:#474747;"></div>
<div class="t" style="left:665.5px;top:216px;font-size:5.2px;color:#a8a8a8;;width:10.00px;text-align:justify;text-align-last:justify">変形</div>
<div class="a" style="left:663.5px;top:215.5px;width:0.6px;height:7px;background:#474747;"></div>
<svg style="left:680.5px;top:216px" width="8" height="6" viewBox="0 0 8 6"><path d="M0.8 0.5V5.5M1.5 3H7.5M1.5 3L3.5 1.2M1.5 3L3.5 4.8" stroke="#b0b0b0" stroke-width="0.8" fill="none"/></svg>
<div class="a" style="left:527px;top:225px;width:163px;height:15px;background:#363636;"></div>
<div class="a" style="left:527.5px;top:226px;width:25px;height:11px;background:#363636;border-radius:1px"></div>
<div class="t" style="left:529.5px;top:229px;font-size:5.2px;color:#dcdcdc;;width:21.45px;text-align:justify;text-align-last:justify">不透明度:</div>
<div class="a" style="left:558.5px;top:226px;width:25px;height:11px;background:#303030;border:0.6px solid #2a2a2a;border-radius:1px"></div>
<div class="t" style="left:560px;top:228.5px;font-size:6px;color:#f4f4f4;font-weight:bold">100 %</div>
<div class="a" style="left:578px;top:231px;width:3px;height:0.9px;background:#ccc;"></div>
<div class="a" style="left:584.5px;top:226px;width:82px;height:11px;background:#303030;border:0.6px solid #2a2a2a;border-radius:1px"></div>
<div class="t" style="left:587px;top:229px;font-size:5.2px;color:#f0f0f0;font-weight:bold;width:10.00px;text-align:justify;text-align-last:justify">通常</div>
<svg style="left:661.5px;top:228.5px" width="4" height="8" viewBox="0 0 4 8"><path d="M0.5 2.8 L2 1 L3.5 2.8 M0.5 5.2 L2 7 L3.5 5.2" stroke="#bbb" stroke-width="0.8" fill="none"/></svg>
<svg style="left:669.5px;top:228.5px" width="7" height="7" viewBox="0 0 7 7"><circle cx="3.5" cy="3.5" r="2.3" fill="#d8d8d8"/><circle cx="3.5" cy="3.5" r="0.9" fill="#3c3c3c"/><path d="M3.5 0.3V6.7M0.3 3.5H6.7M1.2 1.2L5.8 5.8M5.8 1.2L1.2 5.8" stroke="#d8d8d8" stroke-width="0.8"/></svg>
<svg style="left:680px;top:228px" width="6" height="9" viewBox="0 0 6 9"><rect x="0.5" y="3.5" width="5" height="5" fill="#ddd"/><path d="M1.5 3.5 V2 A1.5 1.5 0 0 1 4.5 2" stroke="#ddd" stroke-width="0.8" fill="none"/></svg>
<div class="a" style="left:527px;top:240px;width:163px;height:124px;background:#3a3a3a;"></div>
<div class="a" style="left:682.5px;top:240px;width:7.5px;height:124px;background:#333333;"></div>
<div class="a" style="left:542.8px;top:240px;width:16.3px;height:5px;background:#2a2a2a;border-left:1px solid #151515;border-right:1px solid #1c1c1c"></div>
<div class="a" style="left:542.8px;top:245px;width:16.3px;height:1.2px;background:#111;"></div>
<div class="a" style="left:527px;top:245px;width:155.5px;height:17px;background:#3a3a3a;"></div>
<div class="a" style="left:527px;top:245px;width:155.5px;height:0.8px;background:#2b2b2b;"></div>
<div class="a" style="left:542.8px;top:245px;width:16.3px;height:17px;background:#2b2b2b;border-left:1px solid #151515;border-right:1px solid #1c1c1c"></div>
<div class="a" style="left:542.8px;top:245.3px;width:16.3px;height:1.3px;background:#0e0e0e;"></div>
<svg style="left:543px;top:245.5px" width="16" height="16" viewBox="0 0 16 16"><path d="M1.5 5 L8 3.5 M7 11 L14.5 4" stroke="#0a0a0a" stroke-width="1.2"/></svg>
<div class="t" style="left:561.5px;top:250.5px;font-size:5.2px;color:#dadada;;width:18.47px;text-align:justify;text-align-last:justify">(カーブ)</div>
<svg style="left:666.5px;top:249.5px" width="6" height="7" viewBox="0 0 6 7"><path d="M1.8 4 L2.6 5.5 L5 1.2" stroke="#1a1a1a" stroke-width="0.6" fill="none"/><path d="M2.6 5.3 L4.8 1.5" stroke="#d0d0d0" stroke-width="1.5" stroke-linecap="round"/><path d="M1.6 4.2 L2.4 5.3" stroke="#999" stroke-width="0.7"/></svg>
<div class="a" style="left:527px;top:262px;width:155.5px;height:17px;background:#3a3a3a;"></div>
<div class="a" style="left:527px;top:262px;width:155.5px;height:0.8px;background:#2b2b2b;"></div>
<div class="a" style="left:542.8px;top:262px;width:16.3px;height:17px;background:#2b2b2b;border-left:1px solid #151515;border-right:1px solid #1c1c1c"></div>
<div class="a" style="left:542.8px;top:262.3px;width:16.3px;height:1.3px;background:#0e0e0e;"></div>
<svg style="left:543px;top:262.5px" width="16" height="16" viewBox="0 0 16 16"><path d="M1.5 3 L14.5 14" stroke="#0a0a0a" stroke-width="1.3"/></svg>
<div class="t" style="left:561.5px;top:267.5px;font-size:5.2px;color:#dadada;;width:18.47px;text-align:justify;text-align-last:justify">(カーブ)</div>
<svg style="left:666.5px;top:266.5px" width="6" height="7" viewBox="0 0 6 7"><path d="M1.8 4 L2.6 5.5 L5 1.2" stroke="#1a1a1a" stroke-width="0.6" fill="none"/><path d="M2.6 5.3 L4.8 1.5" stroke="#d0d0d0" stroke-width="1.5" stroke-linecap="round"/><path d="M1.6 4.2 L2.4 5.3" stroke="#999" stroke-width="0.7"/></svg>
<div class="a" style="left:527px;top:279px;width:155.5px;height:17px;background:#3a3a3a;"></div>
<div class="a" style="left:527px;top:279px;width:155.5px;height:0.8px;background:#2b2b2b;"></div>
<div class="a" style="left:542.8px;top:279px;width:16.3px;height:17px;background:#2b2b2b;border-left:1px solid #151515;border-right:1px solid #1c1c1c"></div>
<div class="a" style="left:542.8px;top:279.3px;width:16.3px;height:1.3px;background:#0e0e0e;"></div>
<svg style="left:543px;top:279.5px" width="16" height="16" viewBox="0 0 16 16"><path d="M1.5 2 L14.5 14" stroke="#0a0a0a" stroke-width="1.3"/></svg>
<div class="t" style="left:561.5px;top:284.5px;font-size:5.2px;color:#dadada;;width:18.47px;text-align:justify;text-align-last:justify">(カーブ)</div>
<svg style="left:666.5px;top:283.5px" width="6" height="7" viewBox="0 0 6 7"><path d="M1.8 4 L2.6 5.5 L5 1.2" stroke="#1a1a1a" stroke-width="0.6" fill="none"/><path d="M2.6 5.3 L4.8 1.5" stroke="#d0d0d0" stroke-width="1.5" stroke-linecap="round"/><path d="M1.6 4.2 L2.4 5.3" stroke="#999" stroke-width="0.7"/></svg>
<div class="a" style="left:527px;top:296px;width:155.5px;height:17px;background:#3a3a3a;"></div>
<div class="a" style="left:527px;top:296px;width:155.5px;height:0.8px;background:#2b2b2b;"></div>
<div class="a" style="left:542.8px;top:296px;width:16.3px;height:17px;background:#2b2b2b;border-left:1px solid #151515;border-right:1px solid #1c1c1c"></div>
<div class="a" style="left:542.8px;top:296.3px;width:16.3px;height:1.3px;background:#0e0e0e;"></div>
<svg style="left:543px;top:296.5px" width="16" height="16" viewBox="0 0 16 16"><path d="M1.5 1.5 L14.5 15" stroke="#0a0a0a" stroke-width="1.3"/></svg>
<div class="t" style="left:561.5px;top:301.5px;font-size:5.2px;color:#dadada;;width:18.47px;text-align:justify;text-align-last:justify">(カーブ)</div>
<svg style="left:666.5px;top:300.5px" width="6" height="7" viewBox="0 0 6 7"><path d="M1.8 4 L2.6 5.5 L5 1.2" stroke="#1a1a1a" stroke-width="0.6" fill="none"/><path d="M2.6 5.3 L4.8 1.5" stroke="#d0d0d0" stroke-width="1.5" stroke-linecap="round"/><path d="M1.6 4.2 L2.4 5.3" stroke="#999" stroke-width="0.7"/></svg>
<div class="a" style="left:527px;top:313px;width:155.5px;height:17px;background:#3a3a3a;"></div>
<div class="a" style="left:527px;top:313px;width:155.5px;height:0.8px;background:#2b2b2b;"></div>
<div class="a" style="left:542.8px;top:313px;width:16.3px;height:17px;background:#2b2b2b;border-left:1px solid #151515;border-right:1px solid #1c1c1c"></div>
<div class="a" style="left:542.8px;top:313.3px;width:16.3px;height:1.3px;background:#0e0e0e;"></div>
<svg style="left:543px;top:313.5px" width="16" height="16" viewBox="0 0 16 16"><path d="M2.5 1 L13 15.5" stroke="#0a0a0a" stroke-width="1.3"/></svg>
<div class="t" style="left:561.5px;top:318.5px;font-size:5.2px;color:#dadada;;width:18.47px;text-align:justify;text-align-last:justify">(カーブ)</div>
<svg style="left:666.5px;top:317.5px" width="6" height="7" viewBox="0 0 6 7"><path d="M1.8 4 L2.6 5.5 L5 1.2" stroke="#1a1a1a" stroke-width="0.6" fill="none"/><path d="M2.6 5.3 L4.8 1.5" stroke="#d0d0d0" stroke-width="1.5" stroke-linecap="round"/><path d="M1.6 4.2 L2.4 5.3" stroke="#999" stroke-width="0.7"/></svg>
<div class="a" style="left:527px;top:330px;width:155.5px;height:17px;background:#5b86b9;"></div>
<div class="a" style="left:527px;top:330px;width:155.5px;height:0.8px;background:#27374d;"></div>
<div class="a" style="left:542.8px;top:330px;width:16.3px;height:17px;background:#2b2b2b;border-left:1px solid #151515;border-right:1px solid #1c1c1c"></div>
<div class="a" style="left:542.8px;top:330.3px;width:16.3px;height:1.3px;background:#0e0e0e;"></div>
<svg style="left:543px;top:330.5px" width="16" height="16" viewBox="0 0 16 16"><path d="M5 1 L10.5 15.5" stroke="#0a0a0a" stroke-width="1.3"/></svg>
<div class="t" style="left:561.5px;top:335.5px;font-size:5.2px;color:#f4f4f4;;width:18.47px;text-align:justify;text-align-last:justify">(カーブ)</div>
<div class="a" style="left:665.5px;top:334.5px;width:7px;height:7px;background:#1e2a3c;border-radius:1.5px"></div>
<svg style="left:666.5px;top:334.5px" width="6" height="7" viewBox="0 0 6 7"><path d="M1.8 4 L2.6 5.5 L5 1.2" stroke="#1a1a1a" stroke-width="0.6" fill="none"/><path d="M2.6 5.3 L4.8 1.5" stroke="#d0d0d0" stroke-width="1.5" stroke-linecap="round"/><path d="M1.6 4.2 L2.4 5.3" stroke="#999" stroke-width="0.7"/></svg>
<div class="a" style="left:527px;top:347px;width:155.5px;height:17px;background:#3a3a3a;"></div>
<div class="a" style="left:527px;top:347px;width:155.5px;height:0.8px;background:#2b2b2b;"></div>
<div class="a" style="left:542.8px;top:347px;width:16.3px;height:17px;background:#2b2b2b;border-left:1px solid #151515;border-right:1px solid #1c1c1c"></div>
<div class="a" style="left:542.8px;top:347.3px;width:16.3px;height:1.3px;background:#0e0e0e;"></div>
<div class="a" style="left:547px;top:351.5px;width:7.5px;height:7.5px;background:#000;"></div>
<div class="t" style="left:561.5px;top:352.5px;font-size:5.2px;color:#dadada;;width:18.47px;text-align:justify;text-align-last:justify">(カーブ)</div>
<svg style="left:666.5px;top:351.5px" width="6" height="7" viewBox="0 0 6 7"><path d="M1.8 4 L2.6 5.5 L5 1.2" stroke="#1a1a1a" stroke-width="0.6" fill="none"/><path d="M2.6 5.3 L4.8 1.5" stroke="#d0d0d0" stroke-width="1.5" stroke-linecap="round"/><path d="M1.6 4.2 L2.4 5.3" stroke="#999" stroke-width="0.7"/></svg>
<div class="a" style="left:542.8px;top:363px;width:16.3px;height:1.2px;background:#111;"></div>
<div class="a" style="left:527px;top:364px;width:155.5px;height:0.8px;background:#2b2b2b;"></div>
<div class="a" style="left:683.5px;top:334.5px;width:4.2px;height:27.5px;background:#595959;border-radius:2px"></div>
<div class="a" style="left:527px;top:364px;width:163px;height:13px;background:#393939;"></div>
<svg style="left:531px;top:366.5px" width="8" height="8" viewBox="0 0 8 8"><path d="M0.5 3 L4 1 L7.5 3 L4 5Z" fill="#bbb"/><path d="M0.5 4.5 L4 6.5 L7.5 4.5" stroke="#bbb" fill="none" stroke-width="0.7"/></svg>
<svg style="left:596px;top:366.5px" width="8" height="8" viewBox="0 0 8 8"><rect x="0.8" y="0.8" width="6.4" height="6.4" fill="#ddd"/><rect x="2.3" y="2.3" width="3.4" height="3.4" fill="#555"/></svg>
<svg style="left:608px;top:366.5px" width="8" height="8" viewBox="0 0 8 8"><circle cx="4" cy="4" r="3.3" fill="#888"/><path d="M4 0.7 A3.3 3.3 0 0 1 4 7.3Z" fill="#eee"/></svg>
<svg style="left:619px;top:366.5px" width="8" height="8" viewBox="0 0 8 8"><path d="M1 7 V3 H4" stroke="#ccc" fill="none" stroke-width="0.8"/><circle cx="5" cy="2.5" r="1.5" fill="#ccc"/></svg>
<svg style="left:655.5px;top:366.5px" width="8" height="8" viewBox="0 0 8 8"><path d="M1.5 0.8 H5 L6.5 2.3 V7.2 H1.5Z" stroke="#ccc" fill="none" stroke-width="0.7"/></svg>
<svg style="left:667.5px;top:366.5px" width="8" height="8" viewBox="0 0 8 8"><rect x="1" y="0.8" width="6" height="6.4" stroke="#ccc" fill="none" stroke-width="0.7"/><path d="M2.5 3H5.5M2.5 5H5.5" stroke="#ccc" stroke-width="0.6"/></svg>
<svg style="left:679px;top:366.5px" width="8" height="8" viewBox="0 0 8 8"><path d="M1.5 2 H6.5 L6 7.5 H2Z" fill="#ccc"/><rect x="1" y="0.8" width="6" height="1" fill="#ccc"/></svg>
<div class="a" style="left:527px;top:377px;width:163px;height:1px;background:#2a2a2a;"></div>
<div class="a" style="left:527px;top:377.5px;width:163px;height:11px;background:#303030;"></div>
<div class="a" style="left:530.5px;top:381px;width:1.5px;height:7px;background:#474747;border-radius:1px"></div>
<div class="a" style="left:536px;top:378px;width:16px;height:10.5px;background:#3a3a3a;"></div>
<div class="t" style="left:538px;top:381.5px;font-size:5.2px;color:#f4f4f4;font-weight:bold;width:10.00px;text-align:justify;text-align-last:justify">変形</div>
<div class="t" style="left:555px;top:381.5px;font-size:5.2px;color:#a8a8a8;;width:10.00px;text-align:justify;text-align-last:justify">履歴</div>
<div class="a" style="left:567.5px;top:381px;width:0.6px;height:7px;background:#474747;"></div>
<div class="t" style="left:569px;top:381.5px;font-size:5.2px;color:#a8a8a8;;width:25.00px;text-align:justify;text-align-last:justify">ナビゲータ</div>
<div class="a" style="left:527px;top:388.5px;width:163px;height:50.5px;background:#3c3c3c;"></div>
<svg style="left:538px;top:394px" width="14" height="26" viewBox="0 0 14 26"><path d="M5.5 4.6 L9.8 22.4" stroke="#484848" stroke-width="0.5"/><circle cx="5.5" cy="4.6" r="2.2" fill="#f4f4f4"/><circle cx="7.9" cy="13.6" r="1.5" fill="#b0b0b0"/><rect x="7.8" y="20.4" width="4" height="4" fill="#bdbdbd"/></svg>
<div class="t" style="left:565px;top:396.2px;font-size:5.2px;color:#e6e6e6;font-weight:bold">X:</div>
<div class="a" style="left:571px;top:393.2px;width:32px;height:9.2px;background:#303030;border:0.6px solid #2a2a2a;border-radius:1px"></div>
<div class="t" style="left:573.5px;top:394.8px;font-size:6px;color:#f4f4f4;font-weight:bold">960 px</div>
<div class="t" style="left:565px;top:407.4px;font-size:5.2px;color:#e6e6e6;font-weight:bold">Y:</div>
<div class="a" style="left:571px;top:404.4px;width:32px;height:9.2px;background:#303030;border:0.6px solid #2a2a2a;border-radius:1px"></div>
<div class="t" style="left:573.5px;top:406px;font-size:6px;color:#f4f4f4;font-weight:bold">540 px</div>
<div class="t" style="left:565px;top:424.2px;font-size:5.2px;color:#e6e6e6;font-weight:bold">R:</div>
<div class="a" style="left:571px;top:421.2px;width:32px;height:9.2px;background:#303030;border:0.6px solid #2a2a2a;border-radius:1px"></div>
<div class="t" style="left:573.5px;top:422.8px;font-size:6px;color:#f4f4f4;font-weight:bold">-76 °</div>
<div class="t" style="left:607px;top:396.2px;font-size:5.2px;color:#e6e6e6;font-weight:bold">W:</div>
<div class="a" style="left:614px;top:393.2px;width:32px;height:9.2px;background:#303030;border:0.6px solid #2a2a2a;border-radius:1px"></div>
<div class="t" style="left:616.5px;top:394.8px;font-size:6px;color:#f4f4f4;font-weight:bold">3.1 px</div>
<div class="t" style="left:607px;top:407.4px;font-size:5.2px;color:#e6e6e6;font-weight:bold">H:</div>
<div class="a" style="left:614px;top:404.4px;width:32px;height:9.2px;background:#303030;border:0.6px solid #2a2a2a;border-radius:1px"></div>
<div class="t" style="left:616.5px;top:406px;font-size:6px;color:#f4f4f4;font-weight:bold">14.7 px</div>
<div class="t" style="left:609px;top:424.2px;font-size:5.2px;color:#e6e6e6;font-weight:bold">S:</div>
<div class="a" style="left:614px;top:421.2px;width:32px;height:9.2px;background:#303030;border:0.6px solid #2a2a2a;border-radius:1px"></div>
<div class="t" style="left:616.5px;top:422.8px;font-size:6px;color:#f4f4f4;font-weight:bold">15 px</div>
<svg style="left:596.5px;top:424.5px" width="4" height="4" viewBox="0 0 4 4"><path d="M0.3 0.8 H3.7 L2 3.2Z" fill="#ccc"/></svg>
<div class="a" style="left:652.5px;top:399px;width:1.5px;height:8px;background:#777;border-radius:1px"></div>
<div class="t" style="left:11px;top:441.5px;font-size:5px;color:#e4e4e4;top:441.5px;letter-spacing:0.25px;width:388.25px;text-align:justify;text-align-last:justify">カーブが選択されています。<b>ドラッグ</b>で選択対象を移動します。<b>クリック</b>で別のオブジェクトを選択します。何もない領域を<b>クリック</b>すると、選択が解除されます。</div>
<svg style="left:0;top:0" width="690" height="450" viewBox="0 0 690 450"><g fill="#000"><rect x="269.00" y="86.70" width="10" height="164" transform="rotate(12 274.00 244.70)"/><rect x="269.00" y="86.70" width="10" height="164" transform="rotate(24 274.00 244.70)"/><rect x="269.00" y="86.70" width="10" height="164" transform="rotate(36 274.00 244.70)"/><rect x="269.00" y="86.70" width="10" height="164" transform="rotate(48 274.00 244.70)"/><rect x="269.00" y="86.70" width="10" height="164" transform="rotate(60 274.00 244.70)"/><rect x="269.00" y="86.70" width="10" height="164" transform="rotate(72 274.00 244.70)"/><rect x="269.00" y="86.70" width="10" height="164" transform="rotate(84 274.00 244.70)"/><rect x="269.00" y="86.70" width="10" height="164" transform="rotate(96 274.00 244.70)"/><rect x="269.00" y="86.70" width="10" height="164" transform="rotate(108 274.00 244.70)"/><rect x="269.00" y="86.70" width="10" height="164" transform="rotate(120 274.00 244.70)"/><rect x="269.00" y="86.70" width="10" height="164" transform="rotate(132 274.00 244.70)"/><rect x="269.00" y="86.70" width="10" height="164" transform="rotate(144 274.00 244.70)"/><rect x="269.00" y="86.70" width="10" height="164" transform="rotate(156 274.00 244.70)"/><rect x="269.00" y="86.70" width="10" height="164" transform="rotate(168 274.00 244.70)"/><rect x="269.00" y="86.70" width="10" height="164" transform="rotate(180 274.00 244.70)"/><rect x="269.00" y="86.70" width="10" height="164" transform="rotate(192 274.00 244.70)"/><rect x="269.00" y="86.70" width="10" height="164" transform="rotate(204 274.00 244.70)"/><rect x="269.00" y="86.70" width="10" height="164" transform="rotate(216 274.00 244.70)"/><rect x="269.00" y="86.70" width="10" height="164" transform="rotate(228 274.00 244.70)"/><rect x="269.00" y="86.70" width="10" height="164" transform="rotate(240 274.00 244.70)"/><rect x="269.00" y="86.70" width="10" height="164" transform="rotate(252 274.00 244.70)"/><rect x="269.00" y="86.70" width="10" height="164" transform="rotate(264 274.00 244.70)"/><rect x="269.00" y="86.70" width="10" height="164" transform="rotate(276 274.00 244.70)"/><rect x="269.00" y="86.70" width="10" height="164" transform="rotate(288 274.00 244.70)"/><rect x="269.00" y="86.70" width="10" height="164" transform="rotate(300 274.00 244.70)"/><rect x="269.00" y="86.70" width="10" height="164" transform="rotate(312 274.00 244.70)"/><rect x="269.00" y="86.70" width="10" height="164" transform="rotate(324 274.00 244.70)"/><rect x="269.00" y="86.70" width="10" height="164" transform="rotate(336 274.00 244.70)"/><rect x="269.00" y="86.70" width="10" height="164" transform="rotate(348 274.00 244.70)"/></g><line x1="274.00" y1="244.70" x2="241.15" y2="90.15" stroke="#5a88d0" stroke-width="0.8"/><line x1="264.91" y1="165.87" x2="270.53" y2="164.60" stroke="#8fa8d8" stroke-width="0.6"/><circle cx="273.23" cy="164.10" r="2.4" fill="#fff" stroke="#5a86d0" stroke-width="0.9"/><circle cx="274.00" cy="244.70" r="2.6" fill="#4a88d8" stroke="#e8f0ff" stroke-width="0.9"/><circle cx="241.15" cy="90.15" r="2" fill="#4a86d4" stroke="#a8c8f0" stroke-width="0.5"/></svg>
</div></body></html>
